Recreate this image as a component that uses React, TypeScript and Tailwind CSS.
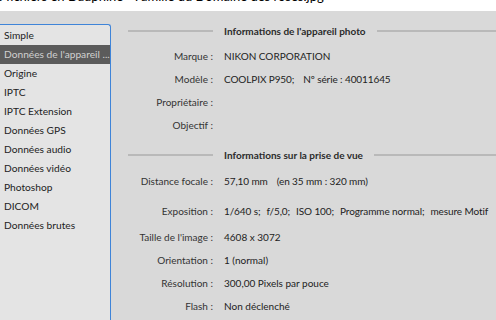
import React from "react";

const categories = [
  "Simple",
  "Données de l'appareil ...",
  "Origine",
  "IPTC",
  "IPTC Extension",
  "Données GPS",
  "Données audio",
  "Données vidéo",
  "Photoshop",
  "DICOM",
  "Données brutes",
];

function SectionHeader({ title, className = "" }: { title: string; className?: string }) {
  return (
    <div className={`flex h-[20px] items-center ${className}`}>
      <div className="h-[2px] w-[85px] bg-[#b9b9b9]" />
      <div className="px-[11px] font-bold text-[#2b2b2b]">{title}</div>
      <div className="h-[2px] flex-1 bg-[#b9b9b9]" />
    </div>
  );
}

function Row({
  label,
  value,
  parts,
  wide = false,
  className = "",
}: {
  label: string;
  value?: string;
  parts?: string[];
  wide?: boolean;
  className?: string;
}) {
  return (
    <div className={`flex h-[23px] items-center ${className}`}>
      <div className="w-[85px] shrink-0 whitespace-nowrap text-right text-[#333]">{label}</div>
      {parts ? (
        <div
          className={`flex whitespace-nowrap pl-[11px] tracking-[-0.1px] text-[#222] ${
            wide ? "gap-[9px]" : "gap-[6px]"
          }`}
        >
          {parts.map((p) => (
            <span key={p}>{p}</span>
          ))}
        </div>
      ) : (
        <div className="whitespace-nowrap pl-[11px] text-[#222]">{value}</div>
      )}
    </div>
  );
}

export default function App() {
  return (
    <div className="flex h-[320px] w-[496px] flex-col overflow-hidden bg-[#d9d9d9] text-[10px] font-['Lato','Liberation_Sans',sans-serif]">
      <div className="h-[11px] shrink-0 overflow-hidden bg-white">
        <div className="-mt-[13px] -ml-[3px] whitespace-nowrap text-[13px] leading-[19px] text-black">
          s fichiers en Dauphine - Famille du Domaine des roses.jpg
        </div>
      </div>

      <div className="flex min-h-0 flex-1">
        <div className="mt-[13px] w-[111px] shrink-0 rounded-tr-[3px] border-t border-r border-[#3f84d8] bg-[#e4e4e4] pt-px">
          {categories.map((c, i) => (
            <div
              key={c}
              className={`h-[19px] truncate pl-[4px] text-[10.2px] leading-[19px] ${
                i === 1 ? "bg-[#5b5b5b] text-[#d0d0d0]" : "text-[#222]"
              }`}
            >
              {c}
            </div>
          ))}
        </div>

        <div className="flex-1 pl-[17px]">
          <SectionHeader title="Informations de l'appareil photo" className="mt-[10px]" />
          <Row label="Marque :" value="NIKON CORPORATION" className="mt-[4px]" />
          <Row label="Modèle :" parts={["COOLPIX P950;", "Nº série : 40011645"]} wide />
          <Row label="Propriétaire :" />
          <Row label="Objectif :" />

          <SectionHeader title="Informations sur la prise de vue" className="mt-[8px]" />
          <Row
            label="Distance focale :"
            parts={["57,10 mm", "(en 35 mm : 320 mm)"]}
            wide
            className="mt-[5px]"
          />
          <Row
            label="Exposition :"
            parts={["1/640 s;", "f/5,0;", "ISO 100;", "Programme normal;", "mesure Motif"]}
            className="mt-[7px]"
          />
          <Row label="Taille de l'image :" value="4608 x 3072" className="mt-[3px]" />
          <Row label="Orientation :" value="1 (normal)" />
          <Row label="Résolution :" value="300,00 Pixels par pouce" />
          <Row label="Flash :" value="Non déclenché" />
        </div>
      </div>
    </div>
  );
}
